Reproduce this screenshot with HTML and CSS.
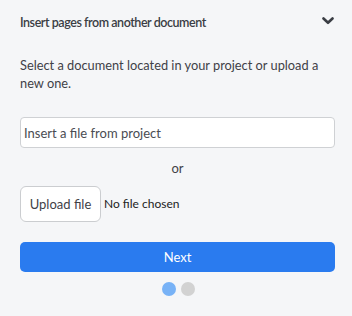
FILE: index.html
```html
<!DOCTYPE html>
<html>
<head>
<meta charset="utf-8">
<link rel="stylesheet" href="styles.css">
</head>
<body>
<div class="panel">
  <div class="header">
    <span class="title">Insert pages from another document</span>
    <svg class="chevron" width="12" height="8" viewBox="0 0 12 8"><path d="M1.5 1.5 L6 5.8 L10.5 1.5" fill="none" stroke="#3a3d44" stroke-width="2.6" stroke-linecap="round" stroke-linejoin="round"/></svg>
  </div>
  <p class="desc">Select a document located in your project or upload a new one.</p>
  <input class="field" type="text" placeholder="Insert a file from project">
  <div class="or">or</div>
  <div class="upload">
    <button class="upload-btn">Upload file</button>
    <span class="nofile">No file chosen</span>
  </div>
  <button class="next">Next</button>
  <div class="dots">
    <span class="dot active"></span>
    <span class="dot"></span>
  </div>
</div>
</body>
</html>
```

FILE: styles.css
```css
html, body {
  margin: 0;
  padding: 0;
  background: #f5f6f8;
}
body {
  font-family: Lato, "Noto Sans", sans-serif;
  color: #3f4147;
  width: 352px;
  height: 316px;
  overflow: hidden;
}
.panel {
  padding: 0 17px 0 20px;
  display: flex;
  flex-direction: column;
}
.header {
  height: 44px;
  display: flex;
  align-items: center;
  justify-content: space-between;
}
.title {
  font-weight: 600;
  font-size: 12.5px;
  letter-spacing: -0.45px;
  color: #3a3d44;
}
.chevron {
  margin-right: 1px;
  margin-top: -3px;
}
.desc {
  margin: 12px 0 0;
  font-size: 12.8px;
  line-height: 18px;
  color: #3f4147;
}
.field {
  margin-top: 25px;
  height: 31px;
  box-sizing: border-box;
  border: 1px solid #cfd1d4;
  border-radius: 4px;
  background: #fff;
  padding: 0 3px;
  font-family: Lato, sans-serif;
  font-size: 13px;
  color: #3f4147;
  outline: none;
}
.field::placeholder {
  color: #4a4c52;
}
.or {
  text-align: center;
  font-size: 13px;
  margin-top: 11px;
  line-height: 18px;
}
.upload {
  margin-top: 9px;
  display: flex;
  align-items: center;
}
.upload-btn {
  width: 81px;
  height: 36px;
  background: #fff;
  border: 1px solid #cbcdd0;
  border-radius: 6px;
  font-family: Lato, sans-serif;
  font-size: 13px;
  color: #3f4147;
  padding: 0;
}
.nofile {
  font-size: 12px;
  margin-left: 3px;
  margin-top: -2px;
  color: #222;
}
.next {
  margin-top: 20px;
  height: 30px;
  border: none;
  border-radius: 5px;
  background: #2a7bef;
  color: #fff;
  font-family: Lato, sans-serif;
  font-size: 13px;
  padding: 0;
}
.dots {
  margin-top: 10px;
  display: flex;
  justify-content: center;
  gap: 5px;
  padding-left: 2px;
}
.dot {
  width: 14px;
  height: 14px;
  border-radius: 50%;
  background: #d2d2d2;
}
.dot.active {
  background: #78b2f6;
}
```
